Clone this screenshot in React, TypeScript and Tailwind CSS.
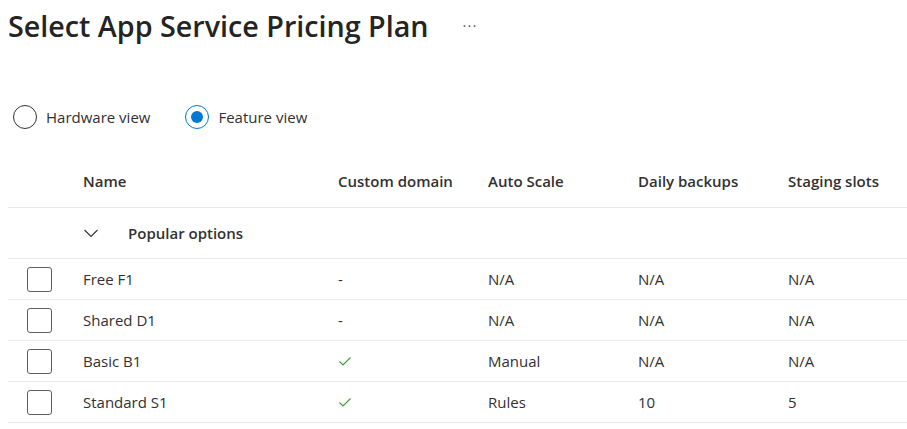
import React from "react";

const rows = [
  { name: "Free F1", domain: "-", scale: "N/A", backups: "N/A", slots: "N/A" },
  { name: "Shared D1", domain: "-", scale: "N/A", backups: "N/A", slots: "N/A" },
  { name: "Basic B1", domain: "check", scale: "Manual", backups: "N/A", slots: "N/A" },
  { name: "Standard S1", domain: "check", scale: "Rules", backups: "10", slots: "5" },
];

function Check() {
  return (
    <svg width="14" height="14" viewBox="0 0 14 14" fill="none">
      <path d="M1.5 7.5 L5 11 L12.5 3.5" stroke="#3a9c3a" strokeWidth="1.1" />
    </svg>
  );
}

export default function App() {
  return (
    <div
      className="w-[907px] h-[429px] bg-white text-[#323130] overflow-hidden pl-2"
      style={{ fontFamily: '"Open Sans", "Noto Sans", sans-serif' }}
    >
      <div className="flex items-center h-[50px] pt-[2px]">
        <h1 className="text-[28.7px] font-semibold text-[#242424] leading-none">
          Select App Service Pricing Plan
        </h1>
        <span className="ml-[34px] text-[15px] text-[#605e5c] tracking-[1px] -mt-[2px]">···</span>
      </div>

      <div className="flex items-center h-[34px] mt-[50px] text-[15px]">
        <div className="flex items-center ml-[5px]">
          <span className="w-[24px] h-[24px] rounded-full border border-[#323130]" />
          <span className="ml-[9px]">Hardware view</span>
        </div>
        <div className="flex items-center ml-[35px]">
          <span className="w-[24px] h-[24px] rounded-full border border-[#0078d4] flex items-center justify-center">
            <span className="w-[12px] h-[12px] rounded-full bg-[#0078d4]" />
          </span>
          <span className="ml-[9px]">Feature view</span>
        </div>
      </div>

      <div className="mt-[22px] text-[15px]">
        <div className="flex items-center h-[52px] border-b border-[#edebe9] font-semibold">
          <div className="w-[75px]" />
          <div className="w-[255px]">Name</div>
          <div className="w-[150px]">Custom domain</div>
          <div className="w-[150px]">Auto Scale</div>
          <div className="w-[150px]">Daily backups</div>
          <div className="flex-1">Staging slots</div>
        </div>
        <div className="flex items-center h-[51px] border-b border-[#edebe9]">
          <div className="w-[75px]" />
          <svg width="16" height="16" viewBox="0 0 16 16" fill="none">
            <path d="M1.5 5 L8 11.5 L14.5 5" stroke="#323130" strokeWidth="1.1" />
          </svg>
          <span className="ml-[29px] font-semibold">Popular options</span>
        </div>
        {rows.map((r) => (
          <div key={r.name} className="flex items-center h-[41px] border-b border-[#edebe9]">
            <div className="w-[75px] pl-[19px]">
              <div className="w-[25px] h-[25px] rounded-[3px] border border-[#605e5c]" />
            </div>
            <div className="w-[255px]">{r.name}</div>
            <div className="w-[150px]">{r.domain === "check" ? <Check /> : r.domain}</div>
            <div className="w-[150px]">{r.scale}</div>
            <div className="w-[150px]">{r.backups}</div>
            <div className="flex-1">{r.slots}</div>
          </div>
        ))}
      </div>
    </div>
  );
}
